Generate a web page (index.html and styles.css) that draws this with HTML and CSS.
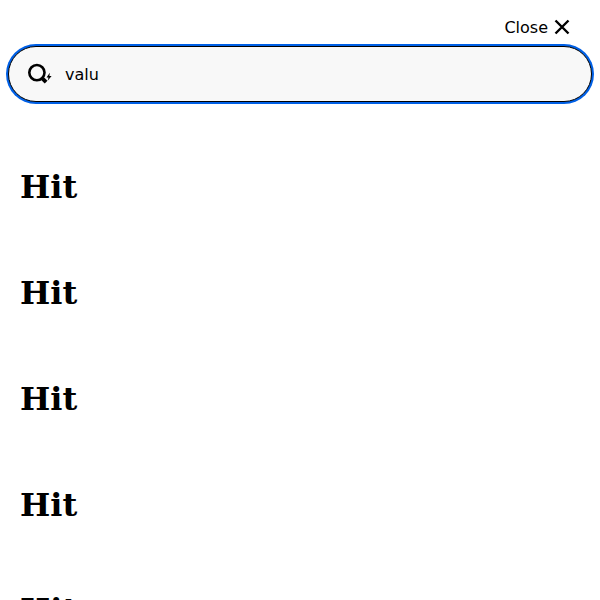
FILE: index.html
```html
<!DOCTYPE html>
<html lang="en">
<head>
<meta charset="utf-8">
<title>Search</title>
<link rel="stylesheet" href="styles.css">
</head>
<body>
<header class="top">
<button class="close" type="button"><span class="close-label">Close</span>
<svg class="close-icon" width="16" height="16" viewBox="0 0 16 16"><path d="M1.500 1.500l13 13M14.500 1.500l-13 13"/></svg>
</button>
</header>
<div class="search">
<svg class="search-icon" width="24" height="24" viewBox="0 0 24 24"><circle cx="8.900" cy="10.600" r="7.600"/><path class="handle" d="M13.800 15.800l4.300 4.400"/><path class="bolt" d="M21.800 10.800l-3.300 4.600h2l-.8 3.400 3.900-4.800h-2.200z"/></svg>
<span class="query">valu</span>
</div>
<main class="hits">
<h1 class="hit">Hit</h1>
<h1 class="hit">Hit</h1>
<h1 class="hit">Hit</h1>
<h1 class="hit">Hit</h1>
<h1 class="hit">Hit</h1>
</main>
</body>
</html>
```
FILE: styles.css
```css
* { box-sizing: border-box; }
body { margin: 0; height: 600px; overflow: hidden; background: #fff; color: #000; font-family: "DejaVu Serif", serif; }
.top { display: flex; justify-content: flex-end; height: 46px; padding: 15px 30px 0 0; }
.close { display: flex; align-items: center; gap: 6px; height: 24px; padding: 0; border: 0; background: none; color: #000; font: 16px/24px "DejaVu Sans", sans-serif; }
.close-label { padding-top: 2px; }
.close-icon { fill: none; stroke: #000; stroke-width: 2.4; }
.search { display: flex; align-items: center; height: 56px; margin: 0 8px; padding: 0 19px; border: 1px solid #000; border-radius: 28px; background: #f8f8f8; box-shadow: 0 0 0 2px #0060e6; }
.search-icon { fill: none; stroke: #000; stroke-width: 2.6; }
.handle { stroke-width: 3.8; }
.bolt { fill: #000; stroke: none; }
.query { margin-left: 13px; padding-top: 2px; font: 16px/24px "DejaVu Sans", sans-serif; }
.hits { padding: 66px 20px 0; }
.hit { height: 38px; margin: 0 0 67.860px; font-size: 32px; line-height: 38px; }
```
